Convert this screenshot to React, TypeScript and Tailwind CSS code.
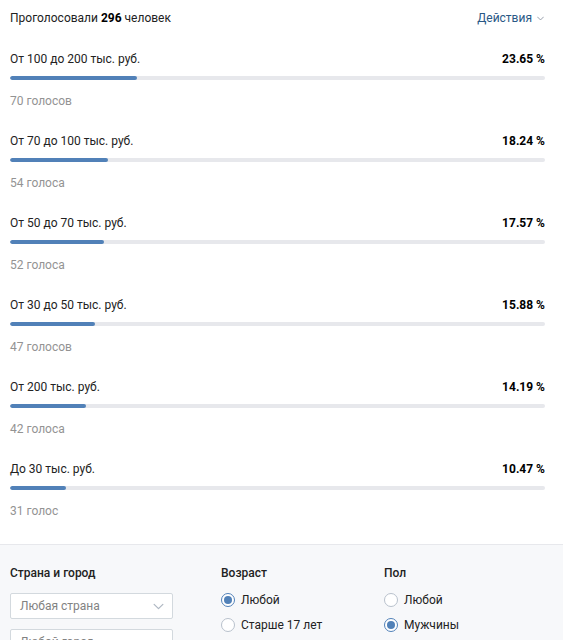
const options = [
  { label: 'От 100 до 200 тыс. руб.', percent: 23.65, votes: '70 голосов' },
  { label: 'От 70 до 100 тыс. руб.', percent: 18.24, votes: '54 голоса' },
  { label: 'От 50 до 70 тыс. руб.', percent: 17.57, votes: '52 голоса' },
  { label: 'От 30 до 50 тыс. руб.', percent: 15.88, votes: '47 голосов' },
  { label: 'От 200 тыс. руб.', percent: 14.19, votes: '42 голоса' },
  { label: 'До 30 тыс. руб.', percent: 10.47, votes: '31 голос' },
]

function Radio({ checked, label }: { checked?: boolean; label: string }) {
  return (
    <div className="flex items-center h-[16px] gap-[6px]">
      <span
        className={
          'w-[14px] h-[14px] rounded-full border flex items-center justify-center bg-white ' +
          (checked ? 'border-[#5181b8]' : 'border-[#b8c1cc]')
        }
      >
        {checked && <span className="w-[8px] h-[8px] rounded-full bg-[#5181b8]" />}
      </span>
      <span className="text-[12px] text-[#222]">{label}</span>
    </div>
  )
}

function Chevron({ className }: { className?: string }) {
  return (
    <svg className={className} viewBox="0 0 12 8" fill="none" stroke="currentColor" strokeWidth={1.4} strokeLinecap="round" strokeLinejoin="round">
      <path d="M1 1.5l5 5 5-5" />
    </svg>
  )
}

export default function App() {
  return (
    <div className="w-[563px] h-[640px] overflow-hidden bg-white font-['Roboto','Liberation_Sans',sans-serif] text-[12px] leading-[16px] text-[#222]">
      <div className="pl-[10px] pr-[18px] pt-[10px] pb-[25px]">
        {/* header */}
        <div className="flex items-center justify-between h-[16px]">
          <div>
            Проголосовали <span className="font-bold text-black">296</span> человек
          </div>
          <div className="flex items-center gap-[5px] text-[#2a5885] pr-[1px]">
            Действия
            <Chevron className="w-[7px] h-[5px] text-[#828a99]" />
          </div>
        </div>

        <div className="mt-[25px] flex flex-col gap-[24px]">
          {options.map((o) => (
            <div key={o.label}>
              <div className="flex justify-between h-[16px]">
                <span>{o.label}</span>
                <span className="font-bold text-black">{o.percent.toFixed(2)} %</span>
              </div>
              <div className="mt-[9px] h-[4px] bg-[#e7e8ec] rounded-[2px] overflow-hidden">
                <div className="h-full bg-[#5181b8] rounded-[2px]" style={{ width: `${o.percent}%` }} />
              </div>
              <div className="mt-[13px] h-[16px] text-[#939393]">{o.votes}</div>
            </div>
          ))}
        </div>
      </div>

      {/* filters */}
      <div className="border-t border-[#e7e8ec] bg-[#f7f8fa] pl-[10px] pt-[20px] flex h-[200px]">
        <div className="w-[163px]">
          <div className="font-medium h-[16px]">Страна и город</div>
          <div className="mt-[12px] h-[26px] bg-white border border-[#d3d9de] rounded-[2px] flex items-center justify-between pl-[9px] pr-[8px] text-[#828282]">
            Любая страна
            <Chevron className="w-[11px] h-[7px] text-[#aeb7c2]" />
          </div>
          <div className="mt-[10px] h-[26px] bg-white border border-[#d3d9de] rounded-[2px] flex items-center pl-[9px] text-[#828282]">
            Любой город
          </div>
        </div>
        <div className="ml-[48px] w-[163px]">
          <div className="font-medium h-[16px]">Возраст</div>
          <div className="mt-[11px] flex flex-col gap-[9px]">
            <Radio checked label="Любой" />
            <Radio label="Старше 17 лет" />
          </div>
        </div>
        <div>
          <div className="font-medium h-[16px]">Пол</div>
          <div className="mt-[11px] flex flex-col gap-[9px]">
            <Radio label="Любой" />
            <Radio checked label="Мужчины" />
          </div>
        </div>
      </div>
    </div>
  )
}
